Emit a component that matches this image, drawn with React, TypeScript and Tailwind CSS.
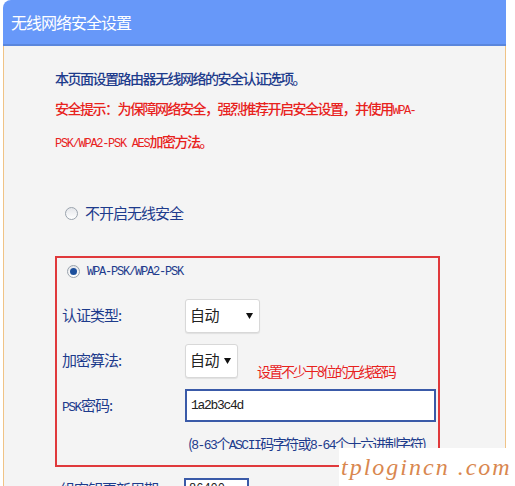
import React from "react";

const cjk = { fontFamily: '"Noto Sans CJK SC", "Noto Sans", sans-serif' };
const mono = { fontFamily: '"Liberation Mono", "Noto Sans CJK SC", monospace' };

function Radio({ checked }: { checked?: boolean }) {
  return (
    <span className="relative inline-flex h-[13px] w-[13px] items-center justify-center rounded-full border border-[#9aa3ad] bg-gradient-to-b from-[#e4e6ea] to-[#ffffff]">
      {checked && <span className="h-[7px] w-[7px] rounded-full bg-[#1c4f9c]" />}
    </span>
  );
}

function Select({ width }: { width: string }) {
  return (
    <div
      className={`flex h-[34px] ${width} items-center justify-between gap-[4px] whitespace-nowrap rounded-[3px] border border-[#d8d8d8] bg-white pl-[4px] pr-[6px] shadow-[0_1px_1px_rgba(0,0,0,0.08)]`}
    >
      <span className="text-[15px] tracking-[-0.5px] text-[#222]">自动</span>
      <svg width="7" height="6" viewBox="0 0 7 6" className="shrink-0">
        <path d="M0 0 H7 L3.5 6 Z" fill="#111" />
      </svg>
    </div>
  );
}

export default function App() {
  return (
    <div className="relative h-[486px] w-[515px] overflow-hidden bg-white" style={cjk}>
      <div className="ml-[3px] w-[503px]">
        {/* Title bar */}
        <div className="flex h-[46px] items-center rounded-tl-[8px] border-b-2 border-[#5a86dc] bg-[#6798f9] pl-[8px]">
          <span className="text-[16px] tracking-[-1px] text-white">无线网络安全设置</span>
        </div>

        {/* Body */}
        <div className="h-[460px] border-x border-[#f0c386] bg-[#f4f4f4] pl-[51px] pt-[17px]">
          <div className="text-[14px] font-medium leading-[30px] tracking-[-1.5px]">
            <div className="text-[#1d3b8c]">本页面设置路由器无线网络的安全认证选项。</div>
            <div className="text-[#e8221d]">
              安全提示：为保障网络安全，强烈推荐开启安全设置，并使用<span style={mono} className="text-[12px] tracking-[-1.5px]">WPA-</span>
            </div>
            <div className="text-[#e8221d]">
              <span style={mono} className="text-[12px] tracking-[-1.3px]">PSK/WPA2-PSK AES</span>加密方法。
            </div>
          </div>

          <div className="mt-[43px] flex items-center gap-[7px] pl-[10px]">
            <Radio />
            <span className="text-[15px] tracking-[-1px] text-[#1d3b8c]">不开启无线安全</span>
          </div>

          {/* WPA box */}
          <div className="relative mt-[31px] w-[385px] border-2 border-[#e0393b] pb-[10px] pl-[5px] pt-[4px]">
            <div className="flex h-[20px] items-center gap-[7px] pl-[5px]">
              <Radio checked />
              <span style={mono} className="text-[12px] tracking-[-1.2px] text-[#1d3b8c]">WPA-PSK/WPA2-PSK</span>
            </div>

            <div className="mt-[13px] flex h-[42px] items-center">
              <span className="w-[123px] text-[15px] tracking-[-1px] text-[#1d3b8c]">认证类型:</span>
              <Select width="w-[75px]" />
            </div>
            <div className="mt-[3px] flex h-[42px] items-center">
              <span className="w-[123px] text-[15px] tracking-[-1px] text-[#1d3b8c]">加密算法:</span>
              <Select width="w-[53px]" />
            </div>
            <div className="mt-[3px] flex h-[42px] items-center">
              <span className="w-[123px] text-[15px] tracking-[-1px] text-[#1d3b8c]">
                <span style={mono} className="text-[13px] tracking-[-1.5px]">PSK</span>密码:
              </span>
              <div className="flex h-[33px] w-[251px] items-center border-2 border-[#3a5aa8] bg-white pl-[4px]">
                <span style={mono} className="text-[13px] tracking-[-1.3px] text-[#222]">1a2b3c4d</span>
              </div>
            </div>
            <div className="mt-[6px] pl-[126px] text-[14px] tracking-[-1.6px] text-[#1d3b8c]">
              (<span style={mono} className="text-[13px] tracking-[-1.5px]">8-63</span>个<span style={mono} className="text-[13px] tracking-[-1.5px]">ASCII</span>码字符或<span style={mono} className="text-[13px] tracking-[-1.5px]">8-64</span>个十六进制字符)
            </div>

            {/* annotation */}
            <span className="absolute left-[200px] top-[103px] whitespace-nowrap text-[14px] tracking-[-2px] text-[#e8221d]">
              设置不少于8位的无线密码
            </span>
          </div>

          <div className="mt-[10px] flex h-[24px] items-center pl-[5px]">
            <span className="w-[124px] text-[15px] tracking-[-1px] text-[#1d3b8c]">组密钥更新周期:</span>
            <div className="flex h-[22px] w-[65px] items-center border-2 border-[#3a5aa8] bg-white pl-[3px]">
              <span style={mono} className="text-[12px] text-[#222]">86400</span>
            </div>
          </div>
        </div>
      </div>

      {/* watermark */}
      <div className="absolute bottom-0 right-0 flex h-[38px] w-[176px] items-center bg-white pl-[2px]">
        <span
          className="text-[24px] italic tracking-[2px] text-[#d9874f]"
          style={{ fontFamily: '"Liberation Serif", "DejaVu Serif", serif' }}
        >
          tplogincn .com
        </span>
      </div>
    </div>
  );
}
